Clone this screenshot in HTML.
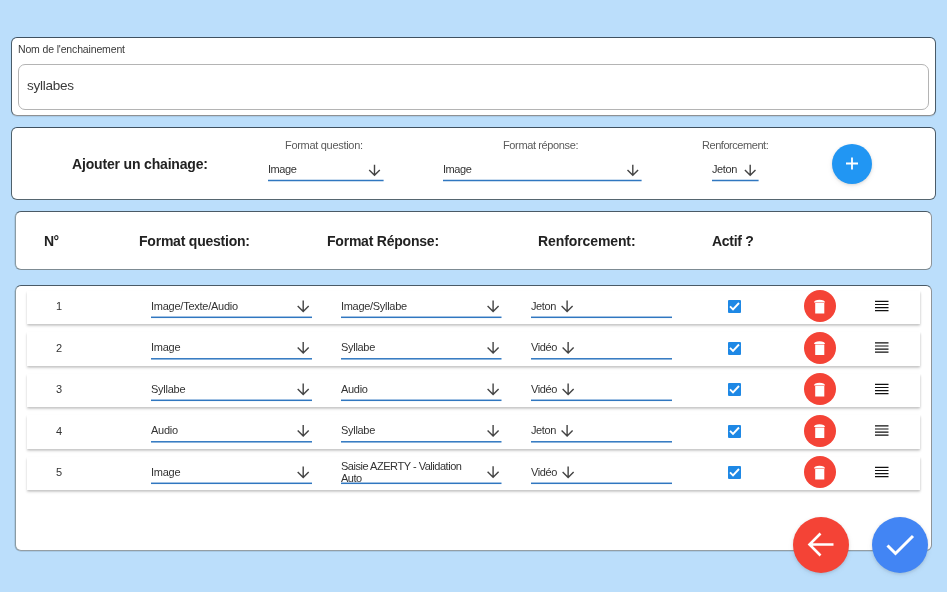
<!DOCTYPE html>
<html><head><meta charset="utf-8"><title>Enchainement</title><style>
html,body{margin:0;padding:0}
body{width:947px;height:592px;background:#bbdefb;position:relative;overflow:hidden;font-family:"Liberation Sans",sans-serif}
.card{position:absolute;box-sizing:border-box;background:#fff;border:1px solid #3b4b57;border-radius:6px}
.inp{position:absolute;box-sizing:border-box;border:1px solid #b4b4b4;border-radius:7px}
.t{position:absolute;white-space:nowrap;will-change:transform}
.row{position:absolute;background:#fff;box-shadow:0 1.5px 2.5px rgba(0,0,0,.17),0.5px 0.5px 2px rgba(0,0,0,.05),-0.5px 0.5px 2px rgba(0,0,0,.05)}
.fab{position:absolute;border-radius:50%;box-shadow:0 1px 3px rgba(0,0,0,.12),0 2px 6px rgba(0,0,0,.06)}
.del{box-shadow:none}
.cb{position:absolute;width:13px;height:13px;background:#1e88e5;border-radius:1px}
#ov{position:absolute;left:0;top:0}
</style></head>
<body>
<div class="card" style="left:11px;top:37px;width:925px;height:79px;border-color:#3f5160 #4a5b68 #8e9194 #4a5c69;box-shadow:0 1px 1px rgba(60,90,110,.15)"></div>
<div class="t" style="left:18.40px;top:44.11px;font-size:10.5px;line-height:10.5px;color:#3a3a3a;font-weight:normal;letter-spacing:-0.15px;">Nom de l'enchainement</div>
<div class="inp" style="left:18px;top:64px;width:911px;height:46px;"></div>
<div class="t" style="left:27.20px;top:79.27px;font-size:13.5px;line-height:13.5px;color:#3a3a3a;font-weight:normal;letter-spacing:-0.25px;">syllabes</div>
<div class="card" style="left:11px;top:127px;width:925px;height:73px;border-color:#3f5160 #4a5b68 #566670 #4f616b"></div>
<div class="t" style="left:71.80px;top:157.15px;font-size:14px;line-height:14px;color:#222;font-weight:bold;letter-spacing:-0.17px;">Ajouter un chainage:</div>
<div class="t" style="left:285.40px;top:140.09px;font-size:11px;line-height:11px;color:#5a5a5a;font-weight:normal;letter-spacing:-0.3px;">Format question:</div>
<div class="t" style="left:268.20px;top:163.89px;font-size:11px;line-height:11px;color:#333;font-weight:normal;letter-spacing:-0.45px;">Image</div>
<div class="t" style="left:503.00px;top:140.09px;font-size:11px;line-height:11px;color:#5a5a5a;font-weight:normal;letter-spacing:-0.37px;">Format réponse:</div>
<div class="t" style="left:443.00px;top:163.89px;font-size:11px;line-height:11px;color:#333;font-weight:normal;letter-spacing:-0.45px;">Image</div>
<div class="t" style="left:701.60px;top:140.09px;font-size:11px;line-height:11px;color:#5a5a5a;font-weight:normal;letter-spacing:-0.45px;">Renforcement:</div>
<div class="t" style="left:712.20px;top:163.89px;font-size:11px;line-height:11px;color:#333;font-weight:normal;letter-spacing:-0.4px;">Jeton</div>
<div class="fab" style="left:832px;top:143.5px;width:40px;height:40px;background:#2196f3"></div>
<div class="card" style="left:15px;top:211px;width:917px;height:59px;border-color:#4a5a66 #8f9498 #7d8b93 #8a9ba3;box-shadow:-0.5px 0 0.6px rgba(90,110,125,.35)"></div>
<div class="t" style="left:44.00px;top:234.05px;font-size:14px;line-height:14px;color:#222;font-weight:bold;letter-spacing:-0.5px;">N°</div>
<div class="t" style="left:138.60px;top:234.05px;font-size:14px;line-height:14px;color:#222;font-weight:bold;letter-spacing:-0.22px;">Format question:</div>
<div class="t" style="left:327.40px;top:234.05px;font-size:14px;line-height:14px;color:#222;font-weight:bold;letter-spacing:-0.22px;">Format Réponse:</div>
<div class="t" style="left:537.80px;top:234.05px;font-size:14px;line-height:14px;color:#222;font-weight:bold;letter-spacing:-0.1px;">Renforcement:</div>
<div class="t" style="left:712.20px;top:234.05px;font-size:14px;line-height:14px;color:#222;font-weight:bold;letter-spacing:-0.29px;">Actif ?</div>
<div class="card c4" style="left:15px;top:285px;width:917px;height:266px;border-color:#4a5a66 #8f9498 #949ea4 #8a9ba3;box-shadow:-0.5px 0.5px 0.6px rgba(90,110,125,.35)"></div>
<div class="row" style="left:27px;top:290.50px;width:893px;height:33.5px;"></div>
<div class="t" style="left:56.40px;top:301.09px;font-size:11px;line-height:11px;color:#333;font-weight:normal;letter-spacing:0px;">1</div>
<div class="t" style="left:151.40px;top:300.69px;font-size:11px;line-height:11px;color:#333;font-weight:normal;letter-spacing:-0.25px;">Image/Texte/Audio</div>
<div class="t" style="left:340.80px;top:300.69px;font-size:11px;line-height:11px;color:#333;font-weight:normal;letter-spacing:-0.3px;">Image/Syllabe</div>
<div class="t" style="left:530.80px;top:300.69px;font-size:11px;line-height:11px;color:#333;font-weight:normal;letter-spacing:-0.4px;">Jeton</div>
<div class="cb" style="left:728px;top:300.00px"></div>
<div class="fab del" style="left:804px;top:290.30px;width:32px;height:32px;background:#f44336"></div>
<div class="row" style="left:27px;top:332.00px;width:893px;height:33.5px;"></div>
<div class="t" style="left:56.40px;top:342.59px;font-size:11px;line-height:11px;color:#333;font-weight:normal;letter-spacing:0px;">2</div>
<div class="t" style="left:151.40px;top:342.19px;font-size:11px;line-height:11px;color:#333;font-weight:normal;letter-spacing:-0.25px;">Image</div>
<div class="t" style="left:340.80px;top:342.19px;font-size:11px;line-height:11px;color:#333;font-weight:normal;letter-spacing:-0.3px;">Syllabe</div>
<div class="t" style="left:530.80px;top:342.19px;font-size:11px;line-height:11px;color:#333;font-weight:normal;letter-spacing:-0.4px;">Vidéo</div>
<div class="cb" style="left:728px;top:341.50px"></div>
<div class="fab del" style="left:804px;top:331.80px;width:32px;height:32px;background:#f44336"></div>
<div class="row" style="left:27px;top:373.50px;width:893px;height:33.5px;"></div>
<div class="t" style="left:56.40px;top:384.09px;font-size:11px;line-height:11px;color:#333;font-weight:normal;letter-spacing:0px;">3</div>
<div class="t" style="left:151.40px;top:383.69px;font-size:11px;line-height:11px;color:#333;font-weight:normal;letter-spacing:-0.25px;">Syllabe</div>
<div class="t" style="left:340.80px;top:383.69px;font-size:11px;line-height:11px;color:#333;font-weight:normal;letter-spacing:-0.3px;">Audio</div>
<div class="t" style="left:530.80px;top:383.69px;font-size:11px;line-height:11px;color:#333;font-weight:normal;letter-spacing:-0.4px;">Vidéo</div>
<div class="cb" style="left:728px;top:383.00px"></div>
<div class="fab del" style="left:804px;top:373.30px;width:32px;height:32px;background:#f44336"></div>
<div class="row" style="left:27px;top:415.00px;width:893px;height:33.5px;"></div>
<div class="t" style="left:56.40px;top:425.59px;font-size:11px;line-height:11px;color:#333;font-weight:normal;letter-spacing:0px;">4</div>
<div class="t" style="left:151.40px;top:425.19px;font-size:11px;line-height:11px;color:#333;font-weight:normal;letter-spacing:-0.25px;">Audio</div>
<div class="t" style="left:340.80px;top:425.19px;font-size:11px;line-height:11px;color:#333;font-weight:normal;letter-spacing:-0.3px;">Syllabe</div>
<div class="t" style="left:530.80px;top:425.19px;font-size:11px;line-height:11px;color:#333;font-weight:normal;letter-spacing:-0.4px;">Jeton</div>
<div class="cb" style="left:728px;top:424.50px"></div>
<div class="fab del" style="left:804px;top:414.80px;width:32px;height:32px;background:#f44336"></div>
<div class="row" style="left:27px;top:456.50px;width:893px;height:33.5px;"></div>
<div class="t" style="left:56.40px;top:467.09px;font-size:11px;line-height:11px;color:#333;font-weight:normal;letter-spacing:0px;">5</div>
<div class="t" style="left:151.40px;top:466.69px;font-size:11px;line-height:11px;color:#333;font-weight:normal;letter-spacing:-0.25px;">Image</div>
<div class="t" style="left:340.8px;top:460.79px;font-size:11px;line-height:11.8px;color:#333;letter-spacing:-0.47px">Saisie AZERTY - Validation<br>Auto</div>
<div class="t" style="left:530.80px;top:466.69px;font-size:11px;line-height:11px;color:#333;font-weight:normal;letter-spacing:-0.4px;">Vidéo</div>
<div class="cb" style="left:728px;top:466.00px"></div>
<div class="fab del" style="left:804px;top:456.30px;width:32px;height:32px;background:#f44336"></div>
<div class="fab big" style="left:793px;top:517px;width:56px;height:56px;background:#f44336"></div>
<div class="fab big" style="left:872px;top:517px;width:56px;height:56px;background:#4285f4"></div>
<svg id="ov" width="947" height="592" viewBox="0 0 947 592">
<path d="M374.5 164.8V175.3M369.2 170.0L374.5 175.3L379.8 170.0" fill="none" stroke="#444" stroke-width="1.4"/>
<rect x="268" y="179.75" width="115.60" height="1.5" fill="#3077c0"/>
<path d="M632.8 164.8V175.3M627.5 170.0L632.8 175.3L638.0999999999999 170.0" fill="none" stroke="#444" stroke-width="1.4"/>
<rect x="443" y="179.75" width="198.60" height="1.5" fill="#3077c0"/>
<path d="M750.2 164.8V175.3M744.9000000000001 170.0L750.2 175.3L755.5 170.0" fill="none" stroke="#444" stroke-width="1.4"/>
<rect x="712" y="179.75" width="46.60" height="1.5" fill="#3077c0"/>
<path d="M852 157.5V169.5M846 163.5H858" stroke="#fff" stroke-width="1.8"/>
<path d="M303.2 300.4V311.4M297.7 305.9L303.2 311.4L308.7 305.9" fill="none" stroke="#444" stroke-width="1.4"/>
<rect x="151" y="316.55" width="161.00" height="1.5" fill="#3077c0"/>
<path d="M493.1 300.4V311.4M487.6 305.9L493.1 311.4L498.6 305.9" fill="none" stroke="#444" stroke-width="1.4"/>
<rect x="341" y="316.55" width="160.50" height="1.5" fill="#3077c0"/>
<path d="M567.1099999999999 300.4V311.4M561.6099999999999 305.9L567.1099999999999 311.4L572.6099999999999 305.9" fill="none" stroke="#444" stroke-width="1.4"/>
<rect x="531" y="316.55" width="141.00" height="1.5" fill="#3077c0"/>
<path d="M730 306.30L733 309.30L739 303.00" fill="none" stroke="#fff" stroke-width="1.9"/>
<path d="M814 302.40Q814.3 299.90 819.5 299.70Q824.7 299.90 825 302.40Z M815.2 302.90H824.3V313.40H815.2Z" fill="#fff"/>
<path d="M875 301.40H888.5M875 304.50H888.5M875 307.60H888.5M875 310.60H888.5" stroke="#111" stroke-width="1.2"/>
<path d="M303.2 341.9V352.9M297.7 347.4L303.2 352.9L308.7 347.4" fill="none" stroke="#444" stroke-width="1.4"/>
<rect x="151" y="358.05" width="161.00" height="1.5" fill="#3077c0"/>
<path d="M493.1 341.9V352.9M487.6 347.4L493.1 352.9L498.6 347.4" fill="none" stroke="#444" stroke-width="1.4"/>
<rect x="341" y="358.05" width="160.50" height="1.5" fill="#3077c0"/>
<path d="M568.14 341.9V352.9M562.64 347.4L568.14 352.9L573.64 347.4" fill="none" stroke="#444" stroke-width="1.4"/>
<rect x="531" y="358.05" width="141.00" height="1.5" fill="#3077c0"/>
<path d="M730 347.80L733 350.80L739 344.50" fill="none" stroke="#fff" stroke-width="1.9"/>
<path d="M814 343.90Q814.3 341.40 819.5 341.20Q824.7 341.40 825 343.90Z M815.2 344.40H824.3V354.90H815.2Z" fill="#fff"/>
<path d="M875 342.90H888.5M875 346.00H888.5M875 349.10H888.5M875 352.10H888.5" stroke="#111" stroke-width="1.2"/>
<path d="M303.2 383.4V394.4M297.7 388.9L303.2 394.4L308.7 388.9" fill="none" stroke="#444" stroke-width="1.4"/>
<rect x="151" y="399.55" width="161.00" height="1.5" fill="#3077c0"/>
<path d="M493.1 383.4V394.4M487.6 388.9L493.1 394.4L498.6 388.9" fill="none" stroke="#444" stroke-width="1.4"/>
<rect x="341" y="399.55" width="160.50" height="1.5" fill="#3077c0"/>
<path d="M568.14 383.4V394.4M562.64 388.9L568.14 394.4L573.64 388.9" fill="none" stroke="#444" stroke-width="1.4"/>
<rect x="531" y="399.55" width="141.00" height="1.5" fill="#3077c0"/>
<path d="M730 389.30L733 392.30L739 386.00" fill="none" stroke="#fff" stroke-width="1.9"/>
<path d="M814 385.40Q814.3 382.90 819.5 382.70Q824.7 382.90 825 385.40Z M815.2 385.90H824.3V396.40H815.2Z" fill="#fff"/>
<path d="M875 384.40H888.5M875 387.50H888.5M875 390.60H888.5M875 393.60H888.5" stroke="#111" stroke-width="1.2"/>
<path d="M303.2 424.9V435.9M297.7 430.4L303.2 435.9L308.7 430.4" fill="none" stroke="#444" stroke-width="1.4"/>
<rect x="151" y="441.05" width="161.00" height="1.5" fill="#3077c0"/>
<path d="M493.1 424.9V435.9M487.6 430.4L493.1 435.9L498.6 430.4" fill="none" stroke="#444" stroke-width="1.4"/>
<rect x="341" y="441.05" width="160.50" height="1.5" fill="#3077c0"/>
<path d="M567.1099999999999 424.9V435.9M561.6099999999999 430.4L567.1099999999999 435.9L572.6099999999999 430.4" fill="none" stroke="#444" stroke-width="1.4"/>
<rect x="531" y="441.05" width="141.00" height="1.5" fill="#3077c0"/>
<path d="M730 430.80L733 433.80L739 427.50" fill="none" stroke="#fff" stroke-width="1.9"/>
<path d="M814 426.90Q814.3 424.40 819.5 424.20Q824.7 424.40 825 426.90Z M815.2 427.40H824.3V437.90H815.2Z" fill="#fff"/>
<path d="M875 425.90H888.5M875 429.00H888.5M875 432.10H888.5M875 435.10H888.5" stroke="#111" stroke-width="1.2"/>
<path d="M303.2 466.4V477.4M297.7 471.9L303.2 477.4L308.7 471.9" fill="none" stroke="#444" stroke-width="1.4"/>
<rect x="151" y="482.55" width="161.00" height="1.5" fill="#3077c0"/>
<path d="M493.1 466.2V477.2M487.6 471.7L493.1 477.2L498.6 471.7" fill="none" stroke="#444" stroke-width="1.4"/>
<rect x="341" y="482.55" width="160.50" height="1.5" fill="#3077c0"/>
<path d="M568.14 466.4V477.4M562.64 471.9L568.14 477.4L573.64 471.9" fill="none" stroke="#444" stroke-width="1.4"/>
<rect x="531" y="482.55" width="141.00" height="1.5" fill="#3077c0"/>
<path d="M730 472.30L733 475.30L739 469.00" fill="none" stroke="#fff" stroke-width="1.9"/>
<path d="M814 468.40Q814.3 465.90 819.5 465.70Q824.7 465.90 825 468.40Z M815.2 468.90H824.3V479.40H815.2Z" fill="#fff"/>
<path d="M875 467.40H888.5M875 470.50H888.5M875 473.60H888.5M875 476.60H888.5" stroke="#111" stroke-width="1.2"/>
<path d="M833.5 544.5H811.5M820.5 533.5L809.5 544.5L820.5 555.5" fill="none" stroke="#fff" stroke-width="2.6"/>
<path d="M887.5 545.5L895.5 553.5L913 536" fill="none" stroke="#fff" stroke-width="3"/>
</svg>
</body></html>
